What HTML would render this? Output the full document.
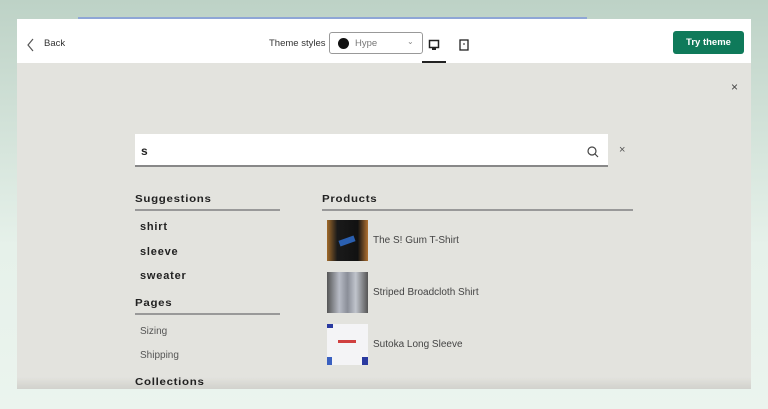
<!DOCTYPE html>
<html><head><meta charset="utf-8"><style>
*{margin:0;padding:0;box-sizing:border-box}
body{width:768px;height:409px;overflow:hidden;background:linear-gradient(#bdd2c6,#e6f1ea 60%,#ebf4ee);font-family:"Liberation Sans",sans-serif;position:relative}
.frame{position:absolute;left:17px;top:19px;width:734px;height:370px;background:#e3e3de;overflow:hidden}
.hdr{position:absolute;left:0;top:0;width:734px;height:44px;background:#fff}
.abs{position:absolute}
.h{font-weight:900;font-size:10px;letter-spacing:0.6px;color:#222;transform:scaleX(1.15);transform-origin:left}
.line{position:absolute;height:1.5px;background:#999}
.sug{font-weight:900;font-size:11px;color:#222;letter-spacing:0.8px}
.pg{font-size:10px;color:#555}
.pt{font-size:10px;color:#444}
.img{position:absolute;width:41px;height:41px}
</style></head><body>
<div class="abs" style="left:78px;top:17px;width:509px;height:2px;background:#8fa6d6"></div>
<div class="frame">
 <div class="hdr">
  <svg class="abs" style="left:10px;top:19px" width="8" height="14"><path d="M6 1L1 7l5 6" stroke="#555" fill="none" stroke-width="1.2"/></svg>
  <div class="abs" style="left:27px;top:19px;font-size:9.5px;color:#333">Back</div>
  <div class="abs" style="left:252px;top:19px;font-size:9.5px;color:#333">Theme styles</div>
  <div class="abs" style="left:312px;top:13px;width:94px;height:22px;border:1px solid #999;border-radius:3px"></div>
  <div class="abs" style="left:321px;top:19px;width:11px;height:11px;border-radius:50%;background:#111"></div>
  <div class="abs" style="left:338px;top:19px;font-size:9.5px;color:#777">Hype</div>
  <div class="abs" style="left:390px;top:18px;font-size:8px;color:#888">⌄</div>
  <svg class="abs" style="left:411px;top:20px" width="12" height="12"><rect x="1.5" y="1.5" width="9" height="7" fill="none" stroke="#222" stroke-width="1.5"/><rect x="4" y="9" width="4" height="2" fill="#222"/></svg>
  <div class="abs" style="left:405px;top:42px;width:24px;height:2px;background:#222"></div>
  <svg class="abs" style="left:442px;top:20px" width="10" height="12"><rect x="1" y="1" width="8" height="10" fill="none" stroke="#222" stroke-width="1.3"/><rect x="4.5" y="4" width="1" height="2" fill="#222"/></svg>
  <div class="abs" style="left:656px;top:12px;width:71px;height:23px;background:#0f7a5a;border-radius:3px;color:#fff;font-size:9.5px;font-weight:bold;text-align:center;line-height:23px">Try theme</div>
 </div>
 <div class="abs" style="left:714px;top:61px;font-size:12px;color:#444">×</div>
 <div class="abs" style="left:118px;top:115px;width:473px;height:33px;background:#fff;border-bottom:2px solid #888"></div>
 <div class="abs" style="left:124px;top:125px;font-size:12px;font-weight:bold;color:#222">s</div>
 <svg class="abs" style="left:570px;top:127px" width="12" height="12"><circle cx="5" cy="5" r="4" fill="none" stroke="#444" stroke-width="1.2"/><path d="M8 8l3 3" stroke="#444" stroke-width="1.2"/></svg>
 <div class="abs" style="left:602px;top:125px;font-size:11px;color:#555">×</div>

 <div class="abs h" style="left:118px;top:175px">Suggestions</div>
 <div class="line" style="left:118px;top:190px;width:145px"></div>
 <div class="abs sug" style="left:123px;top:202px">shirt</div>
 <div class="abs sug" style="left:123px;top:227px">sleeve</div>
 <div class="abs sug" style="left:123px;top:251px">sweater</div>
 <div class="abs h" style="left:118px;top:279px">Pages</div>
 <div class="line" style="left:118px;top:294px;width:145px"></div>
 <div class="abs pg" style="left:123px;top:307px">Sizing</div>
 <div class="abs pg" style="left:123px;top:331px">Shipping</div>
 <div class="abs h" style="left:118px;top:358px">Collections</div>

 <div class="abs h" style="left:305px;top:175px">Products</div>
 <div class="line" style="left:305px;top:190px;width:311px"></div>
 <div class="img" style="left:310px;top:201px;background:linear-gradient(90deg,#a06a2a,#1a1a1a 25%,#111 75%,#b07030)"><div style="position:absolute;left:12px;top:18px;width:16px;height:6px;background:#2a5fb0;transform:rotate(-20deg)"></div></div>
 <div class="abs pt" style="left:356px;top:216px">The S! Gum T-Shirt</div>
 <div class="img" style="left:310px;top:253px;background:linear-gradient(90deg,#555,#b8bcc6 30%,#8a8e98 50%,#c0c4cc 70%,#555)"></div>
 <div class="abs pt" style="left:356px;top:268px">Striped Broadcloth Shirt</div>
 <div class="img" style="left:310px;top:305px;background:#f4f4f6"><div style="position:absolute;left:11px;top:16px;width:18px;height:3px;background:#d04040"></div><div style="position:absolute;left:0;top:0;width:6px;height:4px;background:#2a3aa0"></div><div style="position:absolute;right:0;bottom:0;width:6px;height:8px;background:#2a3aa0"></div><div style="position:absolute;left:0;bottom:0;width:5px;height:8px;background:#3a60c0"></div></div>
 <div class="abs pt" style="left:356px;top:320px">Sutoka Long Sleeve</div>
 <div class="abs" style="left:0;top:358px;width:734px;height:12px;background:linear-gradient(rgba(0,0,0,0),rgba(0,0,0,0.08))"></div>
</div>
</body></html>
